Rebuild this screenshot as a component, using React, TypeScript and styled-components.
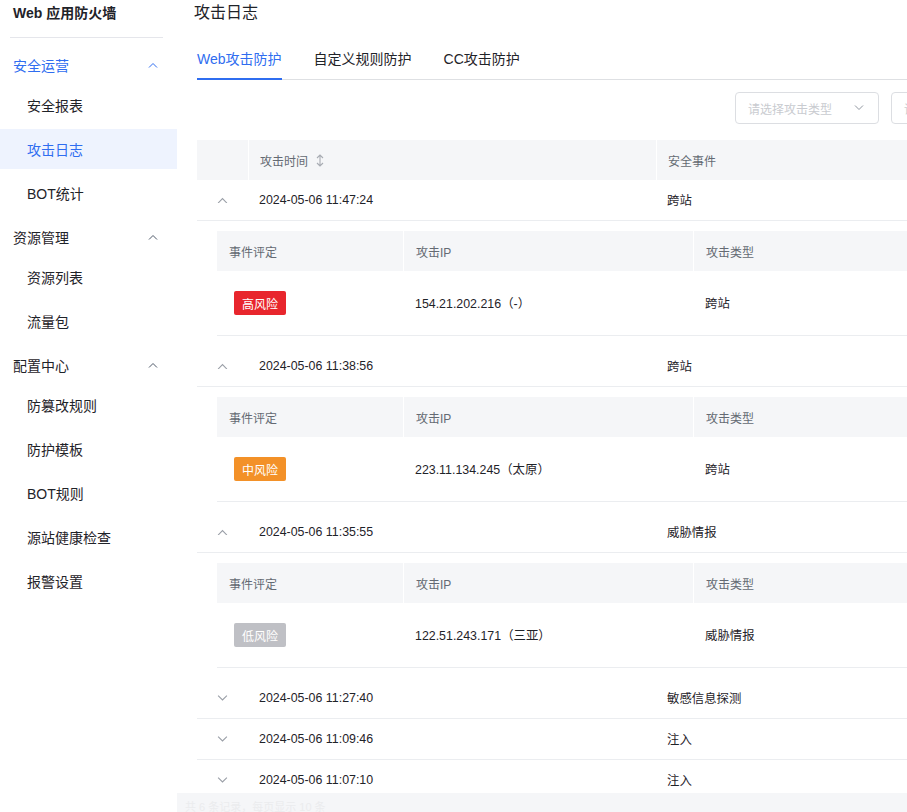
import React from 'react';
import styled, { createGlobalStyle } from 'styled-components';

const GlobalStyle = createGlobalStyle`
  html, body {
    margin: 0;
    padding: 0;
    background: #fff;
    overflow: hidden;
  }
  body {
    font-family: "Liberation Sans", "Noto Sans CJK SC", sans-serif;
    color: #1f2329;
  }
  * { box-sizing: border-box; }
`;

const BLUE = '#2f6df0';
const HEAD_BG = '#f5f6f8';
const LINE = '#ebedf0';

const Layout = styled.div`
  display: flex;
  width: 1055px;
  height: 812px;
`;

const Sidebar = styled.aside`
  width: 177px;
  flex-shrink: 0;
  background: #fff;
`;

const Brand = styled.div`
  height: 37px;
  padding: 0 13px;
  line-height: 26px;
  font-size: 14px;
  font-weight: 700;
  color: #1f2329;
`;

const Divider = styled.div`
  height: 1px;
  margin: 0 14px 7px 10px;
  background: #e5e6eb;
`;

const GroupHead = styled.div<{ $active?: boolean }>`
  height: 40px;
  display: flex;
  align-items: center;
  justify-content: space-between;
  padding: 0 19px 0 13px;
  font-size: 14px;
  color: ${p => (p.$active ? BLUE : '#1f2329')};
`;

const MenuItem = styled.div<{ $active?: boolean }>`
  height: 40px;
  margin-bottom: 4px;
  display: flex;
  align-items: center;
  padding-left: 27px;
  font-size: 14px;
  color: ${p => (p.$active ? BLUE : '#1f2329')};
  background: ${p => (p.$active ? '#eef3fe' : 'transparent')};
`;

const Main = styled.main`
  width: 878px;
  padding: 0 20px;
  position: relative;
`;

const Title = styled.h1`
  margin: 0 0 0 -3px;
  font-size: 16px;
  font-weight: 400;
  line-height: 26px;
  color: #1f2329;
`;

const Tabs = styled.div`
  display: flex;
  gap: 32px;
  margin-top: 15px;
  border-bottom: 1px solid #dee0e3;
`;

const Tab = styled.div<{ $active?: boolean }>`
  font-size: 14px;
  line-height: 22px;
  padding: 7px 0 8px;
  color: ${p => (p.$active ? BLUE : '#1f2329')};
  border-bottom: 2px solid ${p => (p.$active ? BLUE : 'transparent')};
  margin-bottom: -1px;
`;

const Filters = styled.div`
  display: flex;
  justify-content: flex-end;
  gap: 12px;
  margin: 12px 0 16px;
`;

const Select = styled.div`
  width: 144px;
  height: 32px;
  border: 1px solid #dcdee2;
  border-radius: 4px;
  display: flex;
  align-items: center;
  justify-content: space-between;
  padding: 0 14px 0 12px;
  font-size: 12px;
  color: #c9cbd0;
`;

const HeadRow = styled.div`
  display: grid;
  grid-template-columns: 51px 407px 1fr;
  column-gap: 1px;
  height: 40px;
`;

const HeadCell = styled.div`
  background: ${HEAD_BG};
  display: flex;
  align-items: center;
  gap: 8px;
  padding-left: 11px;
  font-size: 12px;
  color: #646a73;
`;

const Row = styled.div`
  display: grid;
  grid-template-columns: 51px 407px 1fr;
  column-gap: 1px;
  height: 41px;
  border-bottom: 1px solid ${LINE};
  font-size: 12.4px;
  color: #1f2329;
`;

const Cell = styled.div<{ $center?: boolean }>`
  display: flex;
  align-items: center;
  justify-content: ${p => (p.$center ? 'center' : 'flex-start')};
  padding-left: ${p => (p.$center ? '0' : '10px')};
`;

const Detail = styled.div`
  padding: 10px 0 10px 20px;
`;

const InnerHead = styled.div`
  display: grid;
  grid-template-columns: 186px 289px 1fr;
  column-gap: 1px;
  height: 40px;
`;

const InnerHeadCell = styled.div`
  background: ${HEAD_BG};
  display: flex;
  align-items: center;
  padding-left: 12px;
  font-size: 12px;
  color: #646a73;
`;

const InnerRow = styled.div`
  display: grid;
  grid-template-columns: 186px 289px 1fr;
  column-gap: 1px;
  height: 65px;
  border-bottom: 1px solid ${LINE};
  font-size: 12.4px;
  color: #1f2329;
`;

const InnerCell = styled.div`
  display: flex;
  align-items: center;
  padding-left: 11px;
`;

const levelColor = {
  high: '#e8262d',
  mid: '#f39128',
  low: '#bfc0c5',
};

const Badge = styled.span<{ $level: keyof typeof levelColor }>`
  margin-left: 6px;
  display: inline-flex;
  align-items: center;
  height: 24px;
  padding: 0 8px;
  border-radius: 2px;
  background: ${p => levelColor[p.$level]};
  color: #fff;
  font-size: 12px;
`;

const Footer = styled.div`
  position: fixed;
  left: 177px;
  right: 0;
  bottom: 0;
  height: 19px;
  background: ${HEAD_BG};
  padding-left: 8px;
  font-size: 11px;
  line-height: 28px;
  color: #ebecee;
  overflow: hidden;
`;

const Chevron = ({ up, color = '#9a9fa7', size = 10 }: { up?: boolean; color?: string; size?: number }) => (
  <svg width={size} height={size * 0.6} viewBox="0 0 10 6" fill="none">
    <polyline
      points={up ? '1,5.5 5,1.5 9,5.5' : '1,0.5 5,4.5 9,0.5'}
      stroke={color}
      strokeWidth="1"
    />
  </svg>
);

const SortIcon = () => (
  <svg width="8" height="13" viewBox="0 0 8 13" fill="none">
    <path d="M1 4 L4 1 L7 4 M4 1 V12 M1 9 L4 12 L7 9" stroke="#a8acb3" strokeWidth="1.1" />
  </svg>
);

type Level = keyof typeof levelColor;

interface LogRow {
  time: string;
  event: string;
  expanded?: boolean;
  level?: Level;
  levelText?: string;
  ip?: string;
}

const rows: LogRow[] = [
  { time: '2024-05-06 11:47:24', event: '跨站', expanded: true, level: 'high', levelText: '高风险', ip: '154.21.202.216（-）' },
  { time: '2024-05-06 11:38:56', event: '跨站', expanded: true, level: 'mid', levelText: '中风险', ip: '223.11.134.245（太原）' },
  { time: '2024-05-06 11:35:55', event: '威胁情报', expanded: true, level: 'low', levelText: '低风险', ip: '122.51.243.171（三亚）' },
  { time: '2024-05-06 11:27:40', event: '敏感信息探测' },
  { time: '2024-05-06 11:09:46', event: '注入' },
  { time: '2024-05-06 11:07:10', event: '注入' },
];

const menu = [
  { title: '安全运营', active: true, items: ['安全报表', '攻击日志', 'BOT统计'] },
  { title: '资源管理', items: ['资源列表', '流量包'] },
  { title: '配置中心', items: ['防篡改规则', '防护模板', 'BOT规则', '源站健康检查', '报警设置'] },
];

const App: React.FC = () => {
  return (
    <>
      <GlobalStyle />
      <Layout>
        <Sidebar>
          <Brand>Web 应用防火墙</Brand>
          <Divider />
          {menu.map(group => (
            <div key={group.title}>
              <GroupHead $active={group.active}>
                {group.title}
                <Chevron up color={group.active ? BLUE : '#4e5969'} size={10} />
              </GroupHead>
              {group.items.map(item => (
                <MenuItem key={item} $active={item === '攻击日志'}>{item}</MenuItem>
              ))}
            </div>
          ))}
        </Sidebar>

        <Main>
          <Title>攻击日志</Title>
          <Tabs>
            <Tab $active>Web攻击防护</Tab>
            <Tab>自定义规则防护</Tab>
            <Tab>CC攻击防护</Tab>
          </Tabs>

          <Filters>
            <Select>
              请选择攻击类型
              <Chevron color="#8f959e" size={10} />
            </Select>
            <Select>
              请选择事件评定
              <Chevron color="#8f959e" size={10} />
            </Select>
          </Filters>

          <HeadRow>
            <HeadCell />
            <HeadCell>
              攻击时间
              <SortIcon />
            </HeadCell>
            <HeadCell>安全事件</HeadCell>
          </HeadRow>

          {rows.map(row => (
            <React.Fragment key={row.time}>
              <Row>
                <Cell $center>
                  <Chevron up={row.expanded} size={11} />
                </Cell>
                <Cell>{row.time}</Cell>
                <Cell>{row.event}</Cell>
              </Row>
              {row.expanded && row.level && (
                <Detail>
                  <InnerHead>
                    <InnerHeadCell>事件评定</InnerHeadCell>
                    <InnerHeadCell>攻击IP</InnerHeadCell>
                    <InnerHeadCell>攻击类型</InnerHeadCell>
                  </InnerHead>
                  <InnerRow>
                    <InnerCell>
                      <Badge $level={row.level}>{row.levelText}</Badge>
                    </InnerCell>
                    <InnerCell>{row.ip}</InnerCell>
                    <InnerCell>{row.event}</InnerCell>
                  </InnerRow>
                </Detail>
              )}
            </React.Fragment>
          ))}
          <Footer>共 6 条记录，每页显示 10 条</Footer>
        </Main>
      </Layout>
    </>
  );
};

export default App;
